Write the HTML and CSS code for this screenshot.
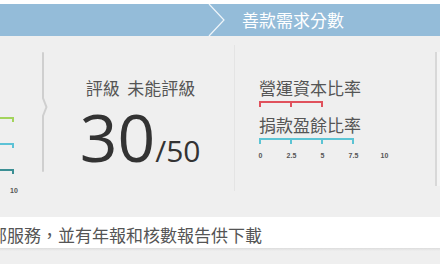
FILE: index.html
```html
<!DOCTYPE html>
<html lang="zh-Hant">
<head>
    <meta charset="UTF-8">
    <title>善款需求分數</title>
    <link rel="stylesheet" href="styles.css">
</head>
<body>
    <div class="top-gap"></div>
    <div class="header">
        <svg class="crumb" width="20" height="34" viewBox="0 0 20 34">
            <polyline points="3,0 18,16 3,32" fill="none" stroke="#ffffff" stroke-width="1.2" opacity="0.85"/>
        </svg>
        <span class="title">善款需求分數</span>
    </div>

    <div class="main">
        <div class="card-prev">
            <div class="bar-end green"></div>
            <div class="bar-end cyan"></div>
            <div class="bar-end teal"></div>
            <div class="tick-label">10</div>
        </div>

        <svg class="divider" width="8" height="124" viewBox="0 0 8 124">
            <polyline points="2,0 2,46 5.5,55 2,64 2,120" fill="none" stroke="#cfcfcf" stroke-width="2"/>
        </svg>

        <div class="card-grade">
            <div class="label">評級&nbsp; 未能評級</div>
            <div class="score"><span class="big">30</span><span class="of">/50</span></div>
        </div>

        <div class="card-ratio">
            <div class="label">營運資本比率</div>
            <div class="bar red" style="width: 64px"></div>
            <div class="label">捐款盈餘比率</div>
            <div class="bar blue" style="width: 95px"></div>
            <div class="axis">
                <span>0</span><span>2.5</span><span>5</span><span>7.5</span><span>10</span>
            </div>
        </div>

        <div class="card-next"></div>
    </div>

    <div class="footer-note">
        <p>部服務，並有年報和核數報告供下載</p>
    </div>
    <div class="footer-shadow"></div>
</body>
</html>
```

FILE: styles.css
```css
body {
    margin: 0;
    width: 440px;
    height: 264px;
    overflow: hidden;
    background-color: #efefef;
    font-family: "Noto Sans CJK TC", "Noto Sans", sans-serif;
    color: #555;
}
.top-gap {
    height: 4px;
    background-color: #ffffff;
}
.header {
    height: 32px;
    background-color: #94bcd9;
    display: flex;
    align-items: center;
}
.crumb {
    margin-left: 206px;
    margin-top: 1px;
}
.title {
    margin-left: 16px;
    color: #ffffff;
    font-size: 17px;
    line-height: 20px;
}
.main {
    display: flex;
    height: 181px;
    background-color: #efefef;
}
.card-prev {
    width: 41px;
    padding-top: 81px;
}
.bar-end {
    width: 12px;
    height: 3px;
    border-top: 2px solid;
    border-right: 2px solid;
    margin-bottom: 21px;
}
.bar-end.green {
    border-color: #a3d45c;
}
.bar-end.cyan {
    border-color: #5cc2d6;
}
.bar-end.teal {
    border-color: #3b8f94;
}
.tick-label {
    margin-top: -8px;
    padding-left: 10px;
    font-family: "Liberation Sans", sans-serif;
    font-weight: bold;
    font-size: 7px;
    color: #555;
}
.divider {
    margin-top: 16px;
}
.card-grade {
    width: 149px;
    padding-left: 37px;
    padding-top: 42px;
}
.label {
    font-size: 17px;
    line-height: 20px;
    color: #555;
    white-space: nowrap;
}
.score {
    margin-top: 5px;
    margin-left: -6px;
    font-family: "Open Sans", "Liberation Sans", sans-serif;
    color: #333;
    white-space: nowrap;
}
.score .big {
    font-size: 66px;
    line-height: 66px;
}
.score .of {
    font-size: 30px;
}
.card-ratio {
    width: 202px;
    margin-top: 9px;
    height: 146px;
    border-left: 1px solid #e4e4e4;
    padding-left: 24px;
    padding-top: 33px;
    box-sizing: border-box;
}
.bar {
    height: 4px;
    margin: 3px 0 8px;
    border-top: 2px solid;
    background-size: 31px 100%;
    background-repeat: repeat-x;
}
.bar.red {
    border-color: #e0515c;
    background-image: linear-gradient(to right, #e0515c 2px, transparent 2px);
}
.bar.blue {
    border-color: #5cc4d4;
    background-image: linear-gradient(to right, #5cc4d4 2px, transparent 2px);
}
.axis {
    display: flex;
    margin-left: -14px;
    margin-top: 1px;
    font-family: "Liberation Sans", sans-serif;
    font-weight: bold;
    font-size: 7px;
    color: #555;
}
.axis span {
    width: 31px;
    text-align: center;
}
.card-next {
    margin-top: 16px;
    height: 134px;
    width: 3px;
    border-left: 2px solid #d8d8d8;
    background-color: #f4f4f4;
}
.footer-note {
    height: 31px;
    background-color: #ffffff;
    overflow: hidden;
}
.footer-note p {
    margin: 0;
    padding-top: 8px;
    margin-left: -10px;
    font-size: 17px;
    line-height: 20px;
    color: #555;
    white-space: nowrap;
}
.footer-shadow {
    height: 3px;
    background: linear-gradient(#dcdcdc, #efefef);
}
```
